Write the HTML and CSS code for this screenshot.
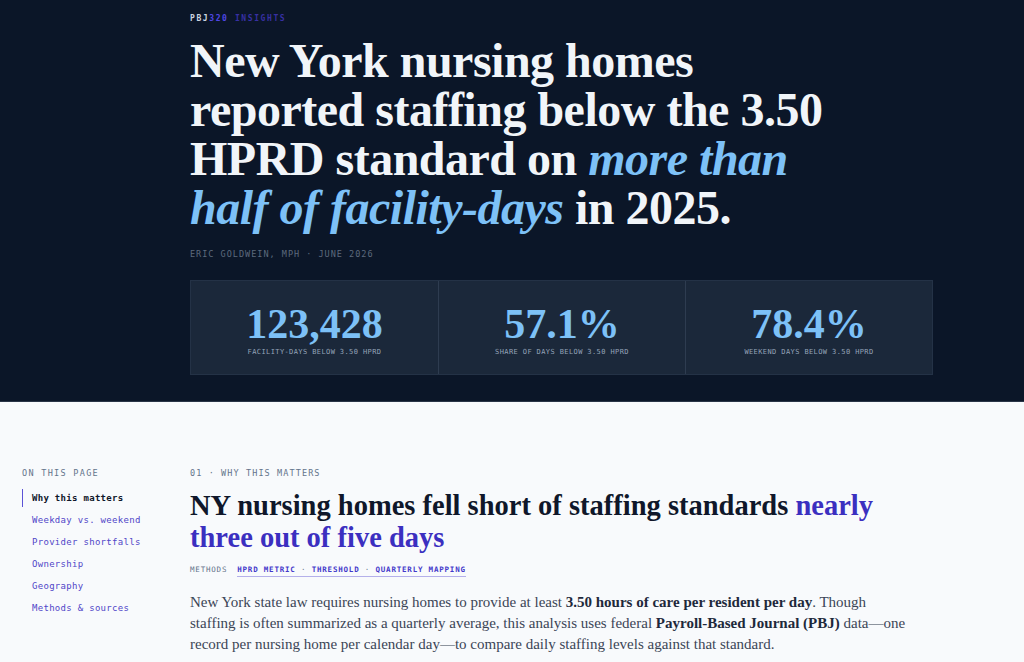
FILE: index.html
```html
<!DOCTYPE html>
<html lang="en">
<head>
    <meta charset="UTF-8">
    <meta name="viewport" content="width=device-width, initial-scale=1.0">
    <title>PBJ320 Insights - New York staffing</title>
    <link rel="stylesheet" href="styles.css">
</head>
<body>
    <header class="hero">
        <div class="hero-inner">
            <div class="brand">PBJ<span class="brand-num">320</span> <span class="brand-sub">INSIGHTS</span></div>
            <h1 class="headline">New York nursing homes reported staffing below the 3.50 HPRD standard on <em>more than half of facility-days</em> in 2025.</h1>
            <div class="byline">ERIC GOLDWEIN, MPH · JUNE 2026</div>

            <div class="stats">
                <div class="stat">
                    <div class="stat-num">123,428</div>
                    <div class="stat-label">FACILITY-DAYS BELOW 3.50 HPRD</div>
                </div>
                <div class="stat">
                    <div class="stat-num">57.1%</div>
                    <div class="stat-label">SHARE OF DAYS BELOW 3.50 HPRD</div>
                </div>
                <div class="stat">
                    <div class="stat-num">78.4%</div>
                    <div class="stat-label">WEEKEND DAYS BELOW 3.50 HPRD</div>
                </div>
            </div>
        </div>
    </header>

    <div class="page">
        <nav class="toc">
            <div class="toc-title">ON THIS PAGE</div>
            <a class="toc-link active" href="#why">Why this matters</a>
            <a class="toc-link" href="#weekday">Weekday vs. weekend</a>
            <a class="toc-link" href="#providers">Provider shortfalls</a>
            <a class="toc-link" href="#ownership">Ownership</a>
            <a class="toc-link" href="#geography">Geography</a>
            <a class="toc-link" href="#methods">Methods &amp; sources</a>
        </nav>

        <main class="article">
            <section id="why">
                <div class="kicker">01 · WHY THIS MATTERS</div>
                <h2 class="section-title">NY nursing homes fell short of staffing standards <span class="accent">nearly three out of five days</span></h2>
                <div class="methods">
                    <span class="methods-label">METHODS</span>
                    <span class="methods-links"><a href="#m1">HPRD METRIC</a> · <a href="#m2">THRESHOLD</a> · <a href="#m3">QUARTERLY MAPPING</a></span>
                </div>
                <p class="body-text">New York state law requires nursing homes to provide at least <strong>3.50 hours of care per resident per day</strong>. Though staffing is often summarized as a quarterly average, this analysis uses federal <strong>Payroll-Based Journal (PBJ)</strong> data—one record per nursing home per calendar day—to compare daily staffing levels against that standard.</p>
            </section>
        </main>
    </div>
</body>
</html>
```

FILE: styles.css
```css
body {
    margin: 0;
    background-color: #f8fafc;
    font-family: "Liberation Serif", serif;
}

/* top banner */
.hero {
    background-color: #0b1628;
    border-bottom: 1px solid #2a3547;
    height: 402px;
    box-sizing: border-box;
}

.hero-inner {
    margin-left: 190px;
    width: 743px;
    padding-top: 14px;
}

.brand {
    font-family: "DejaVu Sans Mono", monospace;
    font-size: 8px;
    font-weight: bold;
    letter-spacing: 1.6px;
    color: #cbd5e1;
    line-height: 10px;
}

.brand-num {
    color: #4f46e5;
}

.brand-sub {
    color: #3730a3;
}

.headline {
    margin: 12px 0 0 0;
    font-family: "Liberation Serif", serif;
    font-weight: bold;
    font-size: 48px;
    line-height: 49px;
    letter-spacing: -0.5px;
    color: #f1f5f9;
    width: 640px;
}

.headline em {
    color: #7dc1f7;
}

.byline {
    margin-top: 17px;
    font-family: "DejaVu Sans Mono", monospace;
    font-size: 8.5px;
    letter-spacing: 1px;
    color: #5d6a7d;
}

.stats {
    margin-top: 21px;
    display: grid;
    grid-template-columns: 1fr 1fr 1fr;
    background-color: #1b283a;
    border: 1px solid #243246;
    height: 95px;
    box-sizing: border-box;
}

.stat {
    display: flex;
    flex-direction: column;
    align-items: center;
    justify-content: center;
    border-left: 1px solid #2e3c50;
    padding-top: 4px;
}

.stat:first-child {
    border-left: none;
}

.stat-num {
    font-family: "Liberation Serif", serif;
    font-weight: bold;
    font-size: 42px;
    line-height: 40px;
    color: #7dc1f7;
}

.stat-label {
    margin-top: 4px;
    font-family: "DejaVu Sans Mono", monospace;
    font-size: 7px;
    letter-spacing: 0.4px;
    color: #94a3b8;
}

/* article area */
.page {
    display: grid;
    grid-template-columns: 168px 1fr;
    padding: 66px 0 0 22px;
}

.toc {
    display: flex;
    flex-direction: column;
}

.toc-title {
    font-family: "DejaVu Sans Mono", monospace;
    font-size: 8.5px;
    letter-spacing: 1.3px;
    color: #64748b;
    margin-bottom: 11px;
}

.toc-link {
    font-family: "DejaVu Sans Mono", monospace;
    font-size: 9px;
    letter-spacing: 0.3px;
    color: #5046c8;
    text-decoration: none;
    padding-left: 9px;
    line-height: 18px;
    margin-bottom: 4px;
    border-left: 1px solid transparent;
}

.toc-link.active {
    color: #0f172a;
    font-weight: bold;
    border-left-color: #5b52d6;
}

.article {
    width: 716px;
}

.kicker {
    font-family: "DejaVu Sans Mono", monospace;
    font-size: 8.5px;
    letter-spacing: 1.1px;
    color: #64748b;
}

.section-title {
    margin: 12px 0 0 0;
    font-family: "Liberation Serif", serif;
    font-weight: bold;
    font-size: 28.5px;
    line-height: 32px;
    color: #0f172a;
}

.accent {
    color: #3b2fc0;
}

.methods {
    margin-top: 11px;
    display: flex;
    gap: 10px;
    font-family: "DejaVu Sans Mono", monospace;
    font-size: 7.5px;
    letter-spacing: 0.8px;
}

.methods-label {
    color: #64748b;
}

.methods-links {
    color: #64748b;
    border-bottom: 1px solid #b4b0ea;
    padding-bottom: 2px;
}

.methods-links a {
    color: #4338ca;
    text-decoration: none;
    font-weight: bold;
}

.body-text {
    margin: 15px 0 0 0;
    font-size: 15px;
    line-height: 21px;
    color: #3b4556;
}

.body-text strong {
    color: #1e293b;
}
```
